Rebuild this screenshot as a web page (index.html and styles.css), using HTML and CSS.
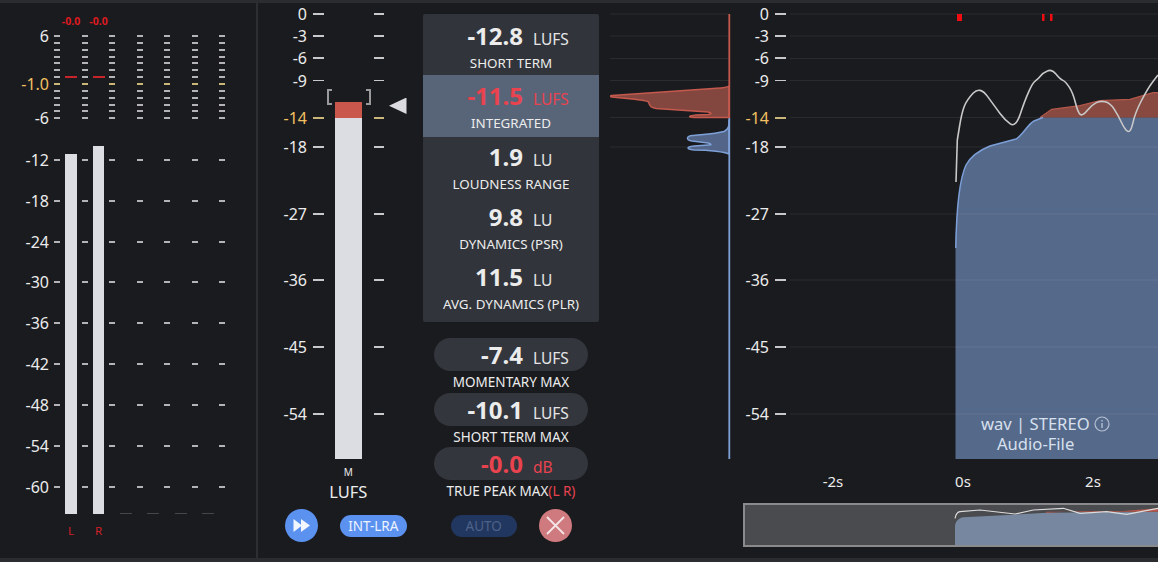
FILE: index.html
```html
<!DOCTYPE html>
<html lang="en">
<head>
    <meta charset="UTF-8">
    <meta name="viewport" content="width=device-width, initial-scale=1.0">
    <title>Loudness Meter</title>
    <link rel="stylesheet" href="styles.css">
</head>
<body>
    <div class="app">
        <!-- True peak meters -->
        <div class="peak-panel">
            <div class="peak-scale">
                <div class="fine"><span>6</span><i></i></div>
                <div class="fine"><span></span><i></i></div>
                <div class="fine"><span></span><i></i></div>
                <div class="fine"><span></span><i></i></div>
                <div class="fine"><span></span><i></i></div>
                <div class="fine"><span></span><i></i></div>
                <div class="fine"><span></span><i></i></div>
                <div class="fine warn"><span>-1.0</span><i></i></div>
                <div class="fine"><span></span><i></i></div>
                <div class="fine"><span></span><i></i></div>
                <div class="fine"><span></span><i></i></div>
                <div class="fine"><span></span><i></i></div>
                <div class="fine gap"><span>-6</span><i></i></div>
                <div class="coarse"><span>-12</span><i></i></div>
                <div class="coarse"><span>-18</span><i></i></div>
                <div class="coarse"><span>-24</span><i></i></div>
                <div class="coarse"><span>-30</span><i></i></div>
                <div class="coarse"><span>-36</span><i></i></div>
                <div class="coarse"><span>-42</span><i></i></div>
                <div class="coarse"><span>-48</span><i></i></div>
                <div class="coarse"><span>-54</span><i></i></div>
                <div class="coarse"><span>-60</span><i></i></div>
            </div>
            <div class="channels">
                <div class="channel">
                    <div class="clip">-0.0</div>
                    <div class="peak"></div>
                    <div class="level" style="height: 360px"></div>
                    <div class="channel-name">L</div>
                </div>
                <div class="channel">
                    <div class="clip">-0.0</div>
                    <div class="peak"></div>
                    <div class="level" style="height: 368px"></div>
                    <div class="channel-name">R</div>
                </div>
                <div class="channels-off"></div>
            </div>
        </div>

        <!-- LUFS meter and readouts -->
        <div class="center">
            <div class="center-top">
                <div class="lufs-meter">
                    <div class="scale">
                        <div class="mark"><span>0</span><i></i></div>
                        <div class="mark"><span>-3</span><i></i></div>
                        <div class="mark"><span>-6</span><i></i></div>
                        <div class="mark"><span>-9</span><i></i></div>
                        <div class="mark warn"><span>-14</span><i></i></div>
                        <div class="mark"><span>-18</span><i></i></div>
                        <div class="mark"><span>-27</span><i></i></div>
                        <div class="mark"><span>-36</span><i></i></div>
                        <div class="mark"><span>-45</span><i></i></div>
                        <div class="mark"><span>-54</span><i></i></div>
                    </div>
                    <div class="fader">
                        <div class="fader-bar"><div class="fader-over"></div></div>
                        <div class="fader-mode">M</div>
                        <div class="fader-name">LUFS</div>
                    </div>
                    <div class="scale scale-right">
                        <div class="mark"><i></i></div>
                        <div class="mark"><i></i></div>
                        <div class="mark"><i></i></div>
                        <div class="mark"><i></i></div>
                        <div class="mark warn"><i></i></div>
                        <div class="mark"><i></i></div>
                        <div class="mark"><i></i></div>
                        <div class="mark"><i></i></div>
                        <div class="mark"><i></i></div>
                        <div class="mark"><i></i></div>
                    </div>
                    <div class="target-arrow"></div>
                </div>

                <div class="stats">
                    <div class="stats-card">
                        <div class="stat">
                            <div class="readout"><b>-12.8</b><span>LUFS</span></div>
                            <div class="stat-name">SHORT TERM</div>
                        </div>
                        <div class="stat stat-active">
                            <div class="readout"><b>-11.5</b><span>LUFS</span></div>
                            <div class="stat-name">INTEGRATED</div>
                        </div>
                        <div class="stat">
                            <div class="readout"><b>1.9</b><span>LU</span></div>
                            <div class="stat-name">LOUDNESS RANGE</div>
                        </div>
                        <div class="stat">
                            <div class="readout"><b>9.8</b><span>LU</span></div>
                            <div class="stat-name">DYNAMICS (PSR)</div>
                        </div>
                        <div class="stat">
                            <div class="readout"><b>11.5</b><span>LU</span></div>
                            <div class="stat-name">AVG. DYNAMICS (PLR)</div>
                        </div>
                    </div>
                    <div class="pill-stat">
                        <div class="readout"><b>-7.4</b><span>LUFS</span></div>
                        <div class="pill-name">MOMENTARY MAX</div>
                    </div>
                    <div class="pill-stat">
                        <div class="readout"><b>-10.1</b><span>LUFS</span></div>
                        <div class="pill-name">SHORT TERM MAX</div>
                    </div>
                    <div class="pill-stat pill-over">
                        <div class="readout"><b>-0.0</b><span>dB</span></div>
                        <div class="pill-name">TRUE PEAK MAX<em>(L R)</em></div>
                    </div>
                </div>
            </div>

            <div class="controls">
                <button class="round-button play-button">
                    <svg width="33" height="33" viewBox="0 0 33 33"><path d="M8.500 10v13l8.500-6.500zM16 10v13l9-6.500z" fill="#f2f6ff"/></svg>
                </button>
                <button class="tag-button tag-on">INT-LRA</button>
                <button class="tag-button tag-off">AUTO</button>
                <button class="round-button close-button">
                    <svg width="33" height="33" viewBox="0 0 33 33"><path d="M8 8l17 17M25 8L8 25" stroke="#f4e6e6" stroke-width="1.800" fill="none"/></svg>
                </button>
            </div>
        </div>

        <!-- Loudness histogram -->
        <svg class="histogram" width="121" height="456" viewBox="610 3 121 456">
            <path d="M610 14H729M610 36H729M610 58.500H729M610 80.500H729M610 117.500H729M610 147H729" stroke="#2b2c30" stroke-width="1"/>
            <path d="M729 86C727 88 722 88 713 88.500L612 95.500C609 96 609 96.500 612 97L632 99C640 100 647 100 648.500 102C650 107 651 107.500 656 108.500L708 112C712 113 712 114 708 114.500L696 115C688 116 688 117 694 117.500H729z" fill="#84473f" stroke="#c4594e" stroke-width="1.500"/>
            <path d="M729 119.500C729 126 729 129 724 131.500C715 134 700 134.500 692 135.500C686 136.500 686 140 692 141L708 143C712 144 712 145 708 145L694 146C686 147 686 149 694 150C710 150 725 152 729 154z" fill="#53668a" stroke="#7ea1d8" stroke-width="1.500"/>
            <path d="M729.300 14V118" stroke="#c4594e" stroke-width="1.800"/>
            <path d="M729.300 118V459" stroke="#7ea1d8" stroke-width="1.800"/>
        </svg>

        <!-- Loudness over time -->
        <div class="timeline">
            <div class="timeline-top">
                <div class="scale">
                    <div class="mark"><span>0</span><i></i></div>
                    <div class="mark"><span>-3</span><i></i></div>
                    <div class="mark"><span>-6</span><i></i></div>
                    <div class="mark"><span>-9</span><i></i></div>
                    <div class="mark warn"><span>-14</span><i></i></div>
                    <div class="mark"><span>-18</span><i></i></div>
                    <div class="mark"><span>-27</span><i></i></div>
                    <div class="mark"><span>-36</span><i></i></div>
                    <div class="mark"><span>-45</span><i></i></div>
                    <div class="mark"><span>-54</span><i></i></div>
                </div>
                <svg class="graph" width="368" height="456" viewBox="790 3 368 456">
                    <path d="M955.500 459V248C956.500 205 960 178 966 165C971 156 980 150 990 146L1016 139C1022 136 1028 124 1034 121L1043 117.500H1158V459z" fill="#55698a"/>
                    <path d="M1040 117.500L1051.700 109.300 1080 105.700 1100 100.700 1130 99.300 1153 92.700H1158V117.500z" fill="#884a40"/>
                    <path d="M1040 117.500L1051.700 109.300 1080 105.700 1100 100.700 1130 99.300 1153 92.700H1158" fill="none" stroke="#b5574b" stroke-width="1.200"/>
                    <path d="M955.800 248C956.500 205 960 178 966 165C971 156 980 150 990 146L1016 139C1022 136 1028 124 1034 121L1043 117.500" fill="none" stroke="#7c9fd8" stroke-width="1.500"/>
                    <path d="M790 14H1158M790 36H1158M790 58.500H1158M790 80.500H1158M790 117.500H1158M790 147H1158M790 214H1158M790 280H1158M790 347H1158M790 414H1158" stroke="#fff" stroke-opacity="0.070" stroke-width="1"/>
                    <path d="M956 182L957.300 140Q957.300 140 959.500 126.500Q961.700 113 964.200 106.500Q966.700 100 973.300 93Q980 86 987.500 96.400Q995 106.700 1000 113.400Q1005 120 1010.300 123.900Q1015.700 127.700 1020.300 113.900Q1025 100 1028.900 91.400Q1032.700 82.700 1035.400 80.900Q1038 79 1040.500 75.900Q1043 72.700 1047.400 70.900Q1051.700 69 1055.900 74Q1060 79 1062.900 80.400Q1065.700 81.700 1069.400 87.400Q1073 93 1075.500 103Q1078 113 1080.400 114.500Q1082.700 116 1087.200 110.500Q1091.700 105 1095.900 102.900Q1100 100.700 1105 101.700Q1110 102.700 1114 108.900Q1118 115 1121.500 122.500Q1125 130 1127.900 131.400Q1130.700 132.700 1132.900 122.900Q1135 113 1141.500 100.500Q1148 88 1153 81.500L1158 75" fill="none" stroke="#c8c8c8" stroke-width="1.600" stroke-linejoin="round"/>
                    <path d="M957 14h5v7h-5zM1042 14h2.500v7H1042zM1050 14h2.500v7H1050z" fill="#f00d12"/>
                </svg>
                <div class="file-info">
                    <div>wav | STEREO
                        <svg class="info-icon" width="16" height="16" viewBox="0 0 16 16"><circle cx="8" cy="8" r="7" fill="none" stroke="#b4c0d2" stroke-width="1.200"/><path d="M8 7v5M8 4v1.500" stroke="#b4c0d2" stroke-width="1.400"/></svg>
                    </div>
                    <div class="file-kind">Audio-File</div>
                </div>
            </div>
            <div class="time-axis">
                <span>-2s</span>
                <span>0s</span>
                <span>2s</span>
            </div>
            <div class="overview">
                <svg width="413" height="40" viewBox="2 2 413 40">
                    <path d="M212 43V23C212.500 18 216 15 220.300 14.300L270.300 11.700 303.700 9.700 415 8.700V43z" fill="#77879f"/>
                    <path d="M303 9.700L340 8 380 8 415 5.300V8.700H303z" fill="#b5574b"/>
                    <path d="M212 15.300C213 11 214 9 217 8.700L237 7 272 11 290.300 7 320.300 5.300 337 10.300 363.700 8.700 383.700 11.300 415 5.300" fill="none" stroke="#dcdcdc" stroke-width="1.200"/>
                </svg>
            </div>
        </div>
    </div>
</body>
</html>
```

FILE: styles.css
```css
body {
    margin: 0;
    background-color: #1a1b1f;
    color: #ececec;
    font-family: 'Noto Sans', Arial, sans-serif;
}

.app {
    display: flex;
    box-sizing: border-box;
    width: 1158px;
    height: 562px;
    overflow: hidden;
    border-top: 3px solid #2b2c2f;
    border-bottom: 4px solid #2b2c2f;
}

/* true peak panel */
.peak-panel {
    position: relative;
    box-sizing: border-box;
    flex: none;
    width: 258px;
    padding-top: 33px;
    border-right: 2px solid #2d2e31;
}

.peak-scale .fine,
.peak-scale .coarse {
    display: flex;
}

.peak-scale .fine {
    height: 6.87px;
}

.peak-scale .gap {
    height: 41.300px;
}

.peak-scale .coarse {
    height: 40.960px;
}

.peak-scale span {
    flex: none;
    width: 49px;
    margin-right: 5px;
    text-align: right;
    font-size: 16px;
    line-height: 0;
}

.peak-scale i {
    width: 172px;
    height: 2px;
    margin-top: -1px;
    background: repeating-linear-gradient(90deg, #b4b4b6 0, #b4b4b6 6px, transparent 6px, transparent 27.500px);
}

.peak-scale .warn span {
    color: #f2c062;
}

.peak-scale .warn i {
    background: repeating-linear-gradient(90deg, #c9b678 0, #c9b678 6px, transparent 6px, transparent 27.500px);
}

.channels {
    position: absolute;
    top: 11px;
    left: 62px;
    display: flex;
    gap: 9.500px;
    height: 524px;
}

.channel {
    display: flex;
    flex-direction: column;
    align-items: center;
    width: 18px;
}

.clip {
    height: 14px;
    color: #dd1a20;
    font-size: 10.500px;
    font-weight: 700;
    line-height: 14px;
}

.peak {
    width: 12px;
    height: 2px;
    margin-top: 48px;
    background-color: #c8252a;
}

.level {
    width: 11.500px;
    margin-top: auto;
    background-color: #dcdde3;
}

.channel-name {
    margin-top: 10px;
    height: 14px;
    color: #d02028;
    font-size: 11.500px;
    line-height: 14px;
}

.channels-off {
    align-self: flex-end;
    width: 94px;
    height: 1px;
    margin-bottom: 24px;
    margin-left: 3px;
    background: repeating-linear-gradient(90deg, #45464a 0, #45464a 12px, transparent 12px, transparent 27.300px);
}

/* center column */
.center {
    flex: none;
    width: 352px;
}

.center-top {
    display: flex;
    height: 511px;
}

.lufs-meter {
    position: relative;
    display: flex;
    flex: none;
    width: 165px;
    padding-left: 23px;
    box-sizing: border-box;
}

.scale {
    display: grid;
    flex: none;
    grid-template-rows: 22px 22px 22.500px 37.500px 29px 67px 66px 67px 67px 1px;
    width: 42px;
    padding-top: 11px;
}

.scale-right {
    width: 11px;
}

.mark {
    display: flex;
}

.mark span {
    width: 26px;
    margin-right: 6px;
    text-align: right;
    font-size: 16px;
    line-height: 0;
}

.mark i {
    flex: none;
    width: 10.500px;
    height: 1.500px;
    margin-top: -1px;
    background-color: #c8c8ca;
}

.mark.warn span {
    color: #f2c062;
}

.mark.warn i {
    background-color: #c9b678;
}

.fader {
    display: flex;
    flex-direction: column;
    align-items: center;
    flex: none;
    width: 50.500px;
    padding-top: 99px;
}

.fader-bar {
    position: relative;
    width: 27.500px;
    height: 357px;
    background-color: #dcdde3;
}

.fader-bar::before,
.fader-bar::after {
    content: "";
    position: absolute;
    top: -13px;
    width: 3px;
    height: 12px;
    border: 2px solid #9a9a9c;
}

.fader-bar::before {
    left: -8px;
    border-right: none;
}

.fader-bar::after {
    right: -9px;
    border-left: none;
}

.fader-over {
    height: 16px;
    background-color: #c9574b;
}

.fader-mode {
    margin-top: 6px;
    font-size: 10px;
    line-height: 14px;
}

.fader-name {
    margin-top: 2px;
    font-size: 16.500px;
    line-height: 22px;
}

.target-arrow {
    position: absolute;
    top: 94.500px;
    left: 131px;
    width: 17.500px;
    height: 16.500px;
    background-color: #dcdce0;
    clip-path: polygon(0 50%, 100% 0, 100% 100%);
}

/* readouts */
.stats {
    flex: none;
    width: 176px;
    padding-top: 11px;
}

.stats-card {
    height: 308px;
    margin-bottom: 16px;
    border-radius: 2px;
    background-color: #31343a;
}

.stat {
    display: flex;
    flex-direction: column;
    box-sizing: border-box;
    height: 60px;
    padding-top: 5.300px;
}

.stat:first-child {
    height: 61.300px;
    padding-top: 7px;
}

.stat-active {
    height: 61.400px;
    padding-top: 5.800px;
    background-color: #586579;
}

.readout {
    display: flex;
    align-items: baseline;
    height: 29px;
    line-height: 29px;
}

.readout b {
    flex: none;
    width: 100px;
    text-align: right;
    font-size: 24px;
    font-weight: 700;
}

.readout span {
    margin-left: 10px;
    font-size: 15.500px;
    color: #e4e4e6;
}

.stat-active .readout b,
.stat-active .readout span {
    color: #e8434f;
}

.stat-name {
    margin-top: 4px;
    text-align: center;
    font-size: 13.400px;
    line-height: 18px;
}

.pill-stat .readout {
    box-sizing: border-box;
    height: 33px;
    margin: 0 11px 0 11px;
    border-radius: 17px;
    background-color: #33363c;
    line-height: 34px;
}

.pill-stat .readout b {
    width: 89px;
}

.pill-name {
    height: 21.700px;
    text-align: center;
    font-size: 13.500px;
    line-height: 22px;
}

.pill-name em {
    color: #e8434f;
    font-style: normal;
}

.pill-over .readout b,
.pill-over .readout span {
    color: #e8434f;
}

/* bottom buttons */
.controls {
    display: flex;
    align-items: center;
    height: 33px;
    padding-left: 27px;
    margin-top: -5px;
}

.round-button {
    flex: none;
    width: 33px;
    height: 33px;
    padding: 0;
    border: none;
    border-radius: 50%;
}

.round-button svg {
    display: block;
}

.play-button {
    background-color: #5b92f0;
}

.close-button {
    margin-left: 22px;
    background-color: #cf7a7e;
}

.tag-button {
    flex: none;
    width: 66.500px;
    height: 22px;
    padding: 0;
    border: none;
    border-radius: 11px;
    font-family: inherit;
    font-size: 13.500px;
}

.tag-on {
    margin-left: 22px;
    background-color: #5b92f0;
    color: #edf3ff;
}

.tag-off {
    margin-left: 44px;
    background-color: #22375f;
    color: #4d628a;
}

/* histogram */
.histogram {
    display: block;
    flex: none;
}

/* timeline */
.timeline {
    flex: none;
    width: 415px;
    margin-left: 12px;
}

.timeline-top {
    position: relative;
    display: flex;
    height: 456px;
}

.graph {
    display: block;
    flex: none;
    margin-left: 5px;
}

.file-info {
    position: absolute;
    top: 411px;
    left: 238px;
    color: #d7e0ee;
    font-size: 16.600px;
    line-height: 20px;
}

.file-kind {
    margin-left: 16px;
}

.info-icon {
    vertical-align: -2px;
}

.time-axis {
    display: flex;
    align-items: center;
    height: 44px;
    padding-left: 75px;
    gap: 100px;
}

.time-axis span {
    width: 30px;
    text-align: center;
    font-size: 15px;
}

.overview {
    box-sizing: border-box;
    height: 44px;
    border: 2px solid #8a8a8c;
    border-right: none;
    background-color: #4a4b4e;
}

.overview svg {
    display: block;
}
```
